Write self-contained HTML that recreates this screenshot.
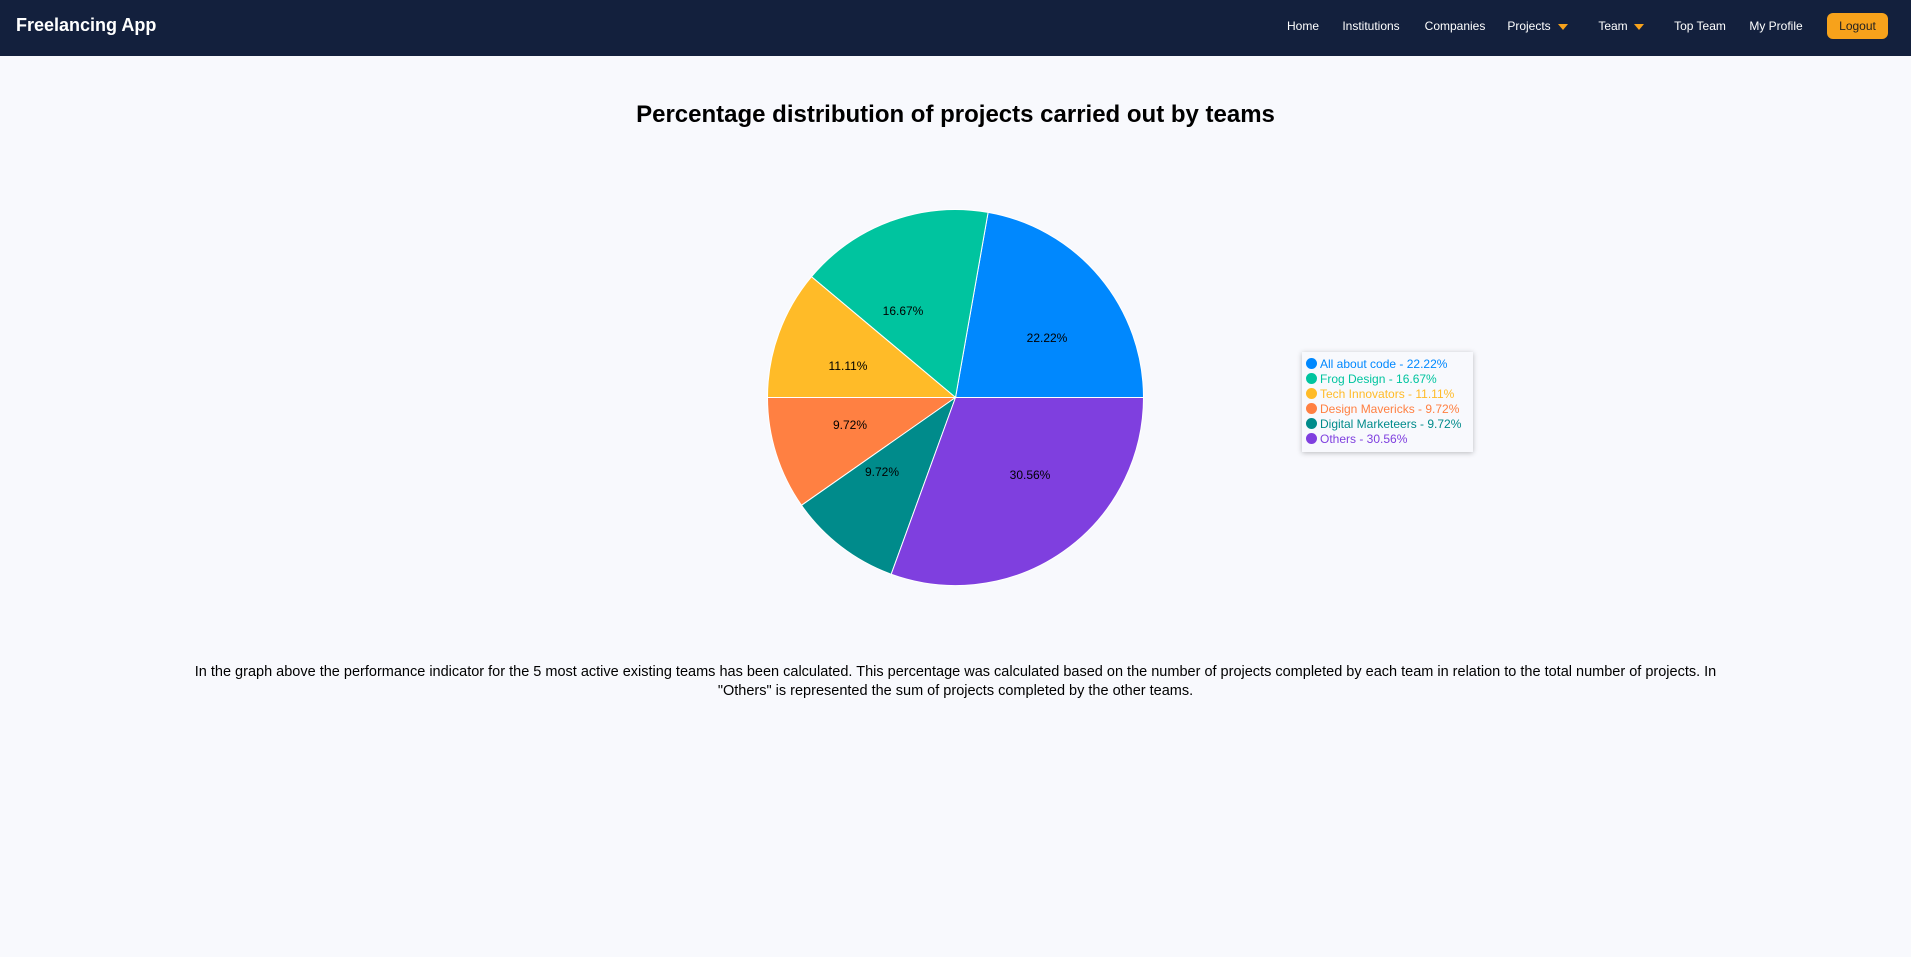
<!DOCTYPE html>
<html><head><meta charset="utf-8"><style>
*{margin:0;padding:0;box-sizing:border-box}
body{width:1911px;height:957px;background:#f8f9fd;font-family:"Liberation Sans",Arial,sans-serif;position:relative;overflow:hidden}
.nav{position:absolute;left:0;top:0;width:1911px;height:56px;background:#13203d}
.brand{position:absolute;left:16px;top:15px;color:#fff;font-weight:bold;font-size:18px}
.ni{position:absolute;top:19px;color:#fff;font-size:12px;white-space:nowrap;transform:translateX(-50%)}
.ar{position:absolute;top:24px;width:0;height:0;border-left:5px solid transparent;border-right:5px solid transparent;border-top:6px solid #f7a21b}
.btn{position:absolute;left:1827px;top:13px;width:61px;height:26px;background:#f7a21b;border-radius:6px;color:#222;font-size:12px;text-align:center;line-height:26px}
h1{position:absolute;left:0;width:1911px;top:101px;text-align:center;font-size:24px;font-weight:bold;color:#000}
.legend{position:absolute;left:1302px;top:352px;width:171px;height:100px;background:#f8f9fd;box-shadow:0 1px 5px rgba(0,0,0,.25);padding:5px 4px;font-size:12px}
.legend div{height:15px;line-height:15px;white-space:nowrap}
.legend span{display:inline-block;width:11px;height:11px;border-radius:50%;vertical-align:-1px;margin-right:3px}
p{position:absolute;left:190px;width:1531px;top:663px;text-align:center;font-size:14.5px;line-height:19px;color:#000}
</style></head><body>
<div class="nav">
<div class="brand">Freelancing App</div>
<div class="ni" style="left:1303px">Home</div>
<div class="ni" style="left:1371px">Institutions</div>
<div class="ni" style="left:1455px">Companies</div>
<div class="ni" style="left:1529px">Projects</div><div class="ar" style="left:1558px"></div>
<div class="ni" style="left:1613px">Team</div><div class="ar" style="left:1634px"></div>
<div class="ni" style="left:1700px">Top Team</div>
<div class="ni" style="left:1776px">My Profile</div>
<div class="btn">Logout</div>
</div>
<h1>Percentage distribution of projects carried out by teams</h1>
<svg style="position:absolute;left:0;top:0" width="1911" height="957">
<g stroke="#fff" stroke-width="1">
<path d="M955.5 397.5 L1143.5 397.5 A188 188 0 0 0 988.1 212.4Z" fill="#0088fe"/>
<path d="M955.5 397.5 L988.1 212.4 A188 188 0 0 0 811.5 276.7Z" fill="#00c49f"/>
<path d="M955.5 397.5 L811.5 276.7 A188 188 0 0 0 767.5 397.5Z" fill="#ffbb28"/>
<path d="M955.5 397.5 L767.5 397.5 A188 188 0 0 0 801.5 505.3Z" fill="#ff8042"/>
<path d="M955.5 397.5 L801.5 505.3 A188 188 0 0 0 891.2 574.2Z" fill="#008b8b"/>
<path d="M955.5 397.5 L891.2 574.2 A188 188 0 0 0 1143.5 397.5Z" fill="#7f3fdf"/>
</g>
<g font-family="Liberation Sans,Arial,sans-serif" font-size="12" text-anchor="middle" fill="#000">
<text x="1047" y="342">22.22%</text>
<text x="903" y="315">16.67%</text>
<text x="848" y="370">11.11%</text>
<text x="850" y="429">9.72%</text>
<text x="882" y="476">9.72%</text>
<text x="1030" y="479">30.56%</text>
</g>
</svg>
<div class="legend">
<div style="color:#0088fe"><span style="background:#0088fe"></span>All about code - 22.22%</div>
<div style="color:#00c49f"><span style="background:#00c49f"></span>Frog Design - 16.67%</div>
<div style="color:#ffbb28"><span style="background:#ffbb28"></span>Tech Innovators - 11.11%</div>
<div style="color:#ff8042"><span style="background:#ff8042"></span>Design Mavericks - 9.72%</div>
<div style="color:#008b8b"><span style="background:#008b8b"></span>Digital Marketeers - 9.72%</div>
<div style="color:#7f3fdf"><span style="background:#7f3fdf"></span>Others - 30.56%</div>
</div>
<p>In the graph above the performance indicator for the 5 most active existing teams has been calculated. This percentage was calculated based on the number of projects completed by each team in relation to the total number of projects. In "Others" is represented the sum of projects completed by the other teams.</p>
</body></html>
